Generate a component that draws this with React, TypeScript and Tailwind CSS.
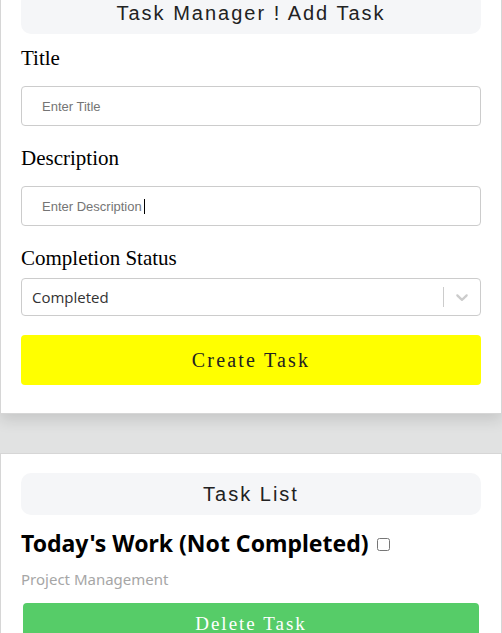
import React from "react";

export default function App() {
  const serif = { fontFamily: '"Liberation Serif", "DejaVu Serif", serif' };
  return (
    <div className="min-h-[633px] w-[502px] overflow-hidden bg-[#e1e2e2]" style={{ fontFamily: '"Liberation Sans", Arial, sans-serif' }}>
      <div className="-mt-[29px] border border-[#d6d6d6] bg-white px-[20px] pt-[20px] pb-[28px] shadow-[0_6px_14px_rgba(0,0,0,0.12)]">
        <div className="flex h-[42px] items-center justify-center rounded-[10px] bg-[#f5f6f8] text-[20px] tracking-[2px] text-[#222]">
          Task Manager ! Add Task
        </div>
        <label className="mt-[11px] block text-[21px] leading-[26px] text-black" style={serif}>Title</label>
        <input
          className="mt-[15px] block h-[40px] w-full rounded-[4px] border border-[#cccccc] pl-[20px] text-[13px] outline-none placeholder:text-[#757575]"
          placeholder="Enter Title"
        />
        <label className="mt-[19px] block text-[21px] leading-[26px] text-black" style={serif}>Description</label>
        <div className="relative mt-[15px]">
          <input
            className="block h-[40px] w-full rounded-[4px] border border-[#cccccc] pl-[20px] text-[13px] outline-none placeholder:text-[#757575]"
            placeholder="Enter Description"
          />
          <span className="absolute left-[123px] top-[13px] h-[15px] w-px bg-black" />
        </div>
        <label className="mt-[19px] block text-[21px] leading-[26px] text-black" style={serif}>Completion Status</label>
        <div className="mt-[7px] flex h-[38px] items-center rounded-[4px] border border-[#cccccc] pl-[10px]">
          <span className="flex-1 text-[15px] text-[#333]" style={{ fontFamily: '"Open Sans", sans-serif' }}>Completed</span>
          <span className="h-[20px] w-px bg-[#cccccc]" />
          <span className="flex w-[36px] items-center justify-center">
            <svg width="20" height="20" viewBox="0 0 20 20" fill="#cccccc">
              <path d="M4.516 7.548c0.436-0.446 1.043-0.481 1.576 0l3.908 3.747 3.908-3.747c0.533-0.481 1.141-0.446 1.574 0 0.436 0.445 0.408 1.197 0 1.615-0.406 0.418-4.695 4.502-4.695 4.502-0.217 0.223-0.502 0.335-0.787 0.335s-0.57-0.112-0.789-0.335c0 0-4.287-4.084-4.695-4.502s-0.436-1.170 0-1.615z" />
            </svg>
          </span>
        </div>
        <button
          className="mt-[19px] flex h-[50px] w-full items-center justify-center rounded-[4px] bg-[#ffff00] text-[20px] tracking-[2.2px] text-[#222]"
          style={serif}
        >
          Create Task
        </button>
      </div>
      <div className="mt-[39px] min-h-[200px] border border-[#d6d6d6] bg-white px-[20px] pt-[19px]">
        <div className="flex h-[42px] items-center justify-center rounded-[10px] bg-[#f5f6f8] text-[20px] tracking-[2px] text-[#222]">
          Task List
        </div>
        <div className="mt-[12px] flex items-center">
          <span className="text-[23px] font-bold leading-[32px] text-black" style={{ fontFamily: '"Noto Sans", sans-serif' }}>
            Today's Work (Not Completed)
          </span>
          <input type="checkbox" className="ml-[8px] mt-[3px] h-[13px] w-[13px]" />
        </div>
        <div className="mt-[10px] text-[15px] leading-[20px] text-[#a6a6a6]" style={{ fontFamily: '"Noto Sans", sans-serif' }}>
          Project Management
        </div>
        <button
          className="mx-[2px] mt-[14px] flex h-[44px] w-[456px] items-start justify-center rounded-[4px] bg-[#56cc68] pt-[7px] text-[19px] tracking-[2px] text-white"
          style={serif}
        >
          Delete Task
        </button>
      </div>
    </div>
  );
}
